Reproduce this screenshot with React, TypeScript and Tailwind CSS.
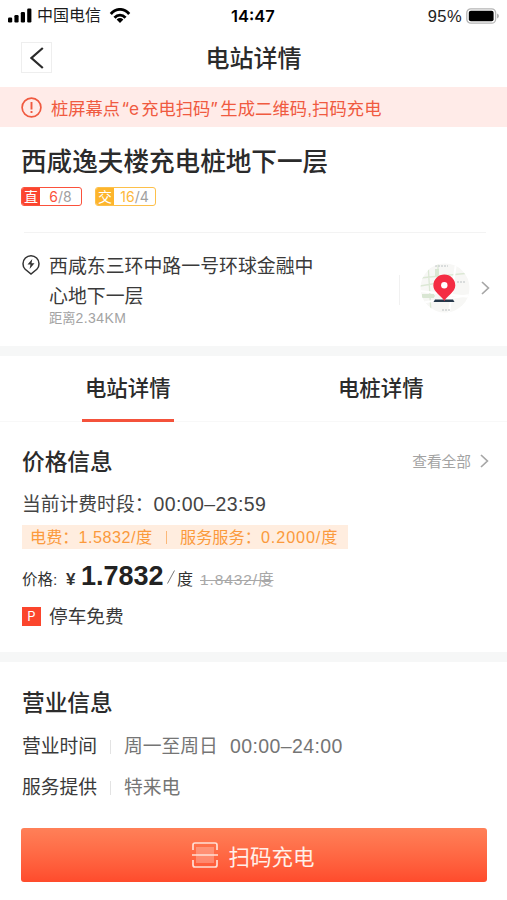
import type { ReactNode } from "react";

function Chevron({ className }: { className?: string }) {
  return (
    <svg className={className} width="9" height="14" viewBox="0 0 9 14" fill="none" stroke="#a6a6a6" strokeWidth="1.7">
      <path d="M1 1l6.4 6L1 13" />
    </svg>
  );
}

function StatusBar() {
  return (
    <header className="flex h-[31px] items-center pl-2 pr-[7px] text-black">
      <div className="flex w-[223px] items-center">
        <svg width="24" height="15" viewBox="0 0 24 15" fill="#000">
          <rect x="0" y="9.5" width="4.2" height="5" rx="1.2" />
          <rect x="6.4" y="7" width="4.2" height="7.5" rx="1.2" />
          <rect x="12.8" y="4" width="4.2" height="10.5" rx="1.2" />
          <rect x="19.2" y="0.5" width="4.2" height="14" rx="1.2" />
        </svg>
        <span className="ml-[5px] text-[16px] leading-5 text-[#1c1c1c]">中国电信</span>
        <svg className="ml-2" width="22" height="16" viewBox="0 0 22 16" fill="none" stroke="#000" strokeWidth="2.8">
          <path d="M1.8 6C7-.2 15-.2 20.2 6" />
          <path d="M5.5 9.8c3.2-3.6 7.8-3.6 11 0" />
          <path d="M11 15l-3.4-3.5q3.4-2.8 6.8 0z" fill="#000" stroke="none" />
        </svg>
      </div>
      <span className="w-[50px] whitespace-nowrap font-['Inter'] text-[16.5px] font-semibold leading-5">14:47</span>
      <span className="ml-auto text-[16.5px] leading-5 tracking-[0.4px] text-[#222]">95%</span>
      <svg className="ml-1" width="34" height="16" viewBox="0 0 34 16">
        <rect x="0.8" y="0.8" width="28.8" height="14.4" rx="4" fill="#fff" stroke="#b5b5b5" strokeWidth="1.3" />
        <rect x="2.8" y="2.8" width="24.8" height="10.4" rx="2" fill="#000" />
        <path d="M31 5.5q2 .6 2 2.500t-2 2.500z" fill="#b5b5b5" />
      </svg>
    </header>
  );
}

function NavBar() {
  return (
    <nav className="grid h-14 grid-cols-[1fr_auto_1fr] items-center px-[21px] pb-[3px]">
      <button className="flex h-[31px] w-[31px] items-center justify-center border border-[#eeeeee]">
        <svg width="14" height="22" viewBox="0 0 14 22" fill="none" stroke="#2b2b2b" strokeWidth="2.2">
          <path d="M12.8 1L1.5 11l11.3 10" />
        </svg>
      </button>
      <h1 className="pt-[3px] text-[24px] font-medium leading-8 text-[#2b2b2b]">电站详情</h1>
    </nav>
  );
}

function Notice() {
  return (
    <div className="flex h-10 items-center bg-[#ffebe8] pl-[21px] text-[#f05a40]">
      <svg width="21" height="21" viewBox="0 0 21 21" fill="none" stroke="currentColor" strokeWidth="1.7">
        <circle cx="10.5" cy="10.5" r="9.4" />
        <path d="M10.5 5v7.500M10.5 14v2" strokeWidth="1.9" />
      </svg>
      <p className="ml-[9px] flex whitespace-nowrap pt-[3px] text-[17.3px] leading-6">
        <span>桩屏幕点</span>
        <span className="w-[21px] text-center font-['Inter'] tracking-[0.6px]">“e</span>
        <span>充电扫码</span>
        <span className="w-[10px] font-['Inter']">”</span>
        <span className="tracking-[0.1px]">生成二维码,扫码充电</span>
      </p>
    </div>
  );
}

type DotProps = { label: string; free: string; total: string; box: string; fill: string; text: string };

function Dot({ label, free, total, box, fill, text }: DotProps) {
  return (
    <span className={`flex h-[19px] w-[61px] overflow-hidden rounded-[3px] border-[1.5px] ${box}`}>
      <span className={`flex w-[18px] items-center justify-center pt-px text-[14px] leading-4 text-white ${fill}`}>{label}</span>
      <span className="flex flex-1 items-center justify-center pt-px font-['Inter'] text-[14px] leading-4 text-[#a0a0a0]">
        <span className={text}>{free}</span>/{total}
      </span>
    </span>
  );
}

function Station() {
  return (
    <section className="h-[219px] px-[21px] pt-[15px]">
      <h2 className="whitespace-nowrap text-[25.6px] font-medium leading-10 text-[#2b2b2b]">西咸逸夫楼充电桩地下一层</h2>
      <div className="mt-[5px] flex gap-[13px]">
        <Dot label="直" free="6" total="8" box="border-[#fb513b]" fill="bg-[#fb452f]" text="text-[#fb513b]" />
        <Dot label="交" free="16" total="4" box="border-[#fdc04a]" fill="bg-[#fdb52c]" text="text-[#fdb83a]" />
      </div>
      <div className="ml-[3px] mt-[26px] h-px bg-[#f3f3f3]" />
      <div className="flex pt-[19px]">
        <svg className="mt-[3px] shrink-0" width="20" height="20" viewBox="0 0 20 20" fill="none" stroke="#333" strokeWidth="1.5">
          <path d="M4.2 14.300a8 8 0 1 1 11.6 0L10 19z" />
          <path d="M11.3 4L6.5 9.600h3L8.6 14l4.9-5.800h-3z" fill="#333" stroke="none" />
        </svg>
        <div className="ml-2 w-[270px] shrink-0">
          <p className="text-[18.9px] leading-[30px] text-[#3a3a3a]">
            西咸东三环中路一号环球金融中
            <br />
            心地下一层
          </p>
          <p className="-mt-[2px] text-[13.3px] leading-4 text-[#a3a3a3]">
            距离<span className="text-[14px] tracking-[0.4px]">2.34KM</span>
          </p>
        </div>
        <div className="ml-[80px] mt-[23px] h-[30px] w-px shrink-0 bg-[#f1f1f1]" />
        <svg className="ml-5 mt-[11px] shrink-0" width="50" height="50" viewBox="0 0 50 50">
          <defs>
            <clipPath id="disc">
              <circle cx="25" cy="25" r="24.5" />
            </clipPath>
          </defs>
          <g clipPath="url(#disc)">
            <rect width="50" height="50" fill="#f7f7f5" />
            <g fill="none" stroke="#dce8d5" strokeWidth="1.3">
              <path d="M0 15l50-5M0 23l18-3M8 0l3 50M2 33h13M18 0v14" />
            </g>
            <path d="M2 31h12v4H2zM15 6h4v7h-4z" fill="#d9e6d3" />
            <g fill="none" stroke="#fff" strokeWidth="2">
              <path d="M0 40l50-8M36 0l-7 50M0 28l50 6" />
            </g>
            <path d="M15 3h13M37 19h8M22 47h9" stroke="#cfd3d4" strokeWidth="1.3" strokeDasharray="2 1" />
            <path d="M15 36.500h18l1.500 2.500h-21z" fill="#26384a" />
            <path d="M24.300 38C21.500 32.500 13.300 29 13.300 22.500a11 11 0 0 1 22 0c0 6.500-8.200 10-11 15.500z" fill="#f42c43" />
            <circle cx="24.300" cy="22.300" r="3.200" fill="#fff" />
          </g>
        </svg>
        <Chevron className="ml-[11px] mt-[29px] shrink-0" />
      </div>
    </section>
  );
}

function Tabs() {
  return (
    <div className="grid h-[66px] grid-cols-2 border-b border-[#f8f8f8] text-[21.4px] font-medium text-[#2b2b2b]">
      <div className="flex flex-col items-center pl-[2px]">
        <span className="mt-[17px] h-[46px] leading-8">电站详情</span>
        <span className="h-[3px] w-[92px] shrink-0 bg-[#f4523b]" />
      </div>
      <div className="flex flex-col items-center pl-px">
        <span className="mt-[17px] leading-8">电桩详情</span>
      </div>
    </div>
  );
}

function Price() {
  return (
    <section className="h-[230px] px-[22px] pt-[25px]">
      <div className="flex h-[30px] items-center">
        <h3 className="text-[22.7px] font-medium leading-[30px] text-[#2b2b2b]">价格信息</h3>
        <span className="ml-auto text-[14.7px] leading-5 text-[#a3a3a3]">查看全部</span>
        <Chevron className="-mt-[2px] ml-[9px] mr-[-4px]" />
      </div>
      <p className="mt-[13px] h-7 whitespace-nowrap text-[18.8px] leading-7 text-[#444]">
        当前计费时段：<span className="text-[19.5px] tracking-[0.4px]">00:00–23:59</span>
      </p>
      <div className="mt-[7px] flex h-6 w-[326px] items-center whitespace-nowrap bg-[#ffeddf] pl-2 text-[16.2px] leading-6 text-[#fb9a3c]">
        <span className="w-[124px]">
          电费：<span className="tracking-[0.5px]">1.5832/</span>度
        </span>
        <span className="ml-[12px] mr-[13px] h-[13px] w-px bg-[#fbb878]" />
        <span>
          服务服务：<span className="tracking-[0.9px]">0.2000/</span>度
        </span>
      </div>
      <div className="mt-[9px] flex h-9 items-baseline whitespace-nowrap text-[#333]">
        <span className="w-[44px] text-[15.5px]">价格:</span>
        <span className="w-[15px] text-[17px] font-bold">¥</span>
        <strong className="w-[86px] text-[27px] leading-9 text-[#222]">1.7832</strong>
        <svg className="mr-[2px] mt-[12px] self-start" width="8" height="14" viewBox="0 0 8 14" stroke="#777" strokeWidth="1">
          <path d="M.5 13.500L7.500.500" />
        </svg>
        <span className="w-[23px] text-[16px]">度</span>
        <s className="text-[15.5px] text-[#a8a8a8]">
          <span className="tracking-[0.9px]">1.8432/</span>度
        </s>
      </div>
      <div className="mt-[8px] flex h-7 items-center">
        <span className="flex h-[19px] w-[19px] items-center justify-center bg-[#fb452c] font-['Inter'] text-[13px] leading-4 text-white">P</span>
        <span className="ml-2 pt-px text-[18.7px] leading-7 text-[#3a3a3a]">停车免费</span>
      </div>
    </section>
  );
}

function InfoRow({ label, children }: { label: string; children: ReactNode }) {
  return (
    <div className="flex h-[41px] items-center whitespace-nowrap text-[18.8px] leading-7">
      <span className="w-[88px] text-[#3a3a3a]">{label}</span>
      <span className="h-[14px] w-px bg-[#e3e3e3]" />
      <span className="ml-[13px] text-[#757575]">{children}</span>
    </div>
  );
}

function Business() {
  return (
    <section className="h-[166px] px-[22px] pt-[26px]">
      <h3 className="text-[22.7px] font-medium leading-[30px] text-[#2b2b2b]">营业信息</h3>
      <div className="mt-[8px]">
        <InfoRow label="营业时间">
          周一至周日<span className="ml-3 text-[19.5px] tracking-[0.4px]">00:00–24:00</span>
        </InfoRow>
        <InfoRow label="服务提供">特来电</InfoRow>
      </div>
    </section>
  );
}

function ScanButton() {
  return (
    <button className="mx-auto flex h-[54px] w-[466px] items-center rounded-[3px] bg-linear-to-b from-[#ff8058] to-[#ff4b2c] pl-[171px] text-white">
      <svg width="26" height="26" viewBox="0 0 26 26" fill="none" stroke="#ffdfd5" strokeWidth="1.7">
        <rect x="4" y="5" width="18" height="16" fill="#fff" fillOpacity=".25" stroke="none" />
        <path d="M1 8V3q0-2 2-2h20q2 0 2 2v5M1 18v5q0 2 2 2h20q2 0 2-2v-5M0 13h26" />
      </svg>
      <span className="ml-[11px] pt-[5px] text-[21.5px] leading-8 text-[#fff0e9]">扫码充电</span>
    </button>
  );
}

export default function App() {
  return (
    <main className="h-[900px] w-[507px] overflow-hidden bg-white font-['Liberation_Sans','Noto_Sans_CJK_SC',sans-serif]">
      <StatusBar />
      <NavBar />
      <Notice />
      <Station />
      <div className="h-[10px] bg-[#f6f7f7]" />
      <Tabs />
      <Price />
      <div className="h-[10px] bg-[#f6f7f7]" />
      <Business />
      <ScanButton />
    </main>
  );
}
